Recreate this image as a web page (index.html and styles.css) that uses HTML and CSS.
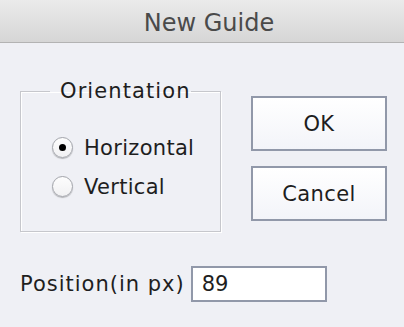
FILE: index.html
```html
<!DOCTYPE html>
<html>
<head>
<meta charset="utf-8">
<link rel="stylesheet" href="styles.css">
</head>
<body>
<div class="dialog">
  <div class="titlebar">New Guide</div>
  <div class="content">
    <div class="top">
      <fieldset class="group">
        <legend>Orientation</legend>
        <div class="radio-row"><span class="radio checked"></span><span>Horizontal</span></div>
        <div class="radio-row"><span class="radio"></span><span>Vertical</span></div>
      </fieldset>
      <div class="buttons">
        <div class="btn">OK</div>
        <div class="btn">Cancel</div>
      </div>
    </div>
    <div class="position">
      <span class="label">Position(in px)</span>
      <div class="input">89</div>
    </div>
  </div>
</div>
</body>
</html>
```
FILE: styles.css
```css
html, body {
  margin: 0;
  padding: 0;
}
body {
  width: 404px;
  height: 327px;
  background: #eff0f5;
  font-family: "DejaVu Sans", "Liberation Sans", sans-serif;
  color: #1e1e1e;
  overflow: hidden;
}
.titlebar {
  height: 42px;
  border-bottom: 1px solid #b3b3b3;
  background: linear-gradient(#ebebeb, #d6d6d6);
  text-align: center;
  line-height: 46px;
  font-size: 24px;
  padding-left: 14px;
  color: #4a4a4a;
}
.content {
  padding: 0 0 0 20px;
}
.top {
  display: flex;
  align-items: flex-start;
}
.group {
  margin: 37px 0 0 0;
  padding: 26px 0 0 0;
  width: 201px;
  height: 152px;
  min-width: 0;
  border: 1px solid #c6c7cc;
  box-shadow: inset 1px 1px 0 #fff, 1px 1px 0 #fff;
  box-sizing: border-box;
}
.group legend {
  font-size: 21px;
  letter-spacing: 1.1px;
  padding: 0 0 0 10px;
  margin-left: 29px;
  line-height: 22px;
}
.radio-row {
  display: flex;
  align-items: center;
  font-size: 21px;
  letter-spacing: 0.3px;
  height: 39px;
  margin-left: 31px;
}
.radio {
  width: 19px;
  height: 19px;
  border-radius: 50%;
  border: 1px solid #a3a5ab;
  background: linear-gradient(#fdfdfd, #f1f1f3);
  box-shadow: 0 1px 1px rgba(0,0,0,0.25);
  margin-right: 11px;
  position: relative;
  flex: none;
}
.radio.checked::after {
  content: "";
  position: absolute;
  left: 6px;
  top: 6px;
  width: 7px;
  height: 7px;
  border-radius: 50%;
  background: #000;
}
.buttons {
  margin: 53px 0 0 30px;
  display: flex;
  flex-direction: column;
  gap: 15px;
}
.btn {
  width: 136px;
  height: 55px;
  box-sizing: border-box;
  border: 2px solid #9198a9;
  background: linear-gradient(#ffffff, #f3f4f9);
  display: flex;
  align-items: center;
  justify-content: center;
  font-size: 21px;
  letter-spacing: 0.4px;
}
.position {
  display: flex;
  align-items: center;
  margin-top: 34px;
}
.label {
  font-size: 21px;
  letter-spacing: 1px;
  margin-right: 6px;
}
.input {
  width: 136px;
  height: 36px;
  box-sizing: border-box;
  border: 2px solid #9198a9;
  background: #fff;
  font-size: 21px;
  line-height: 32px;
  padding-left: 9px;
}
```
